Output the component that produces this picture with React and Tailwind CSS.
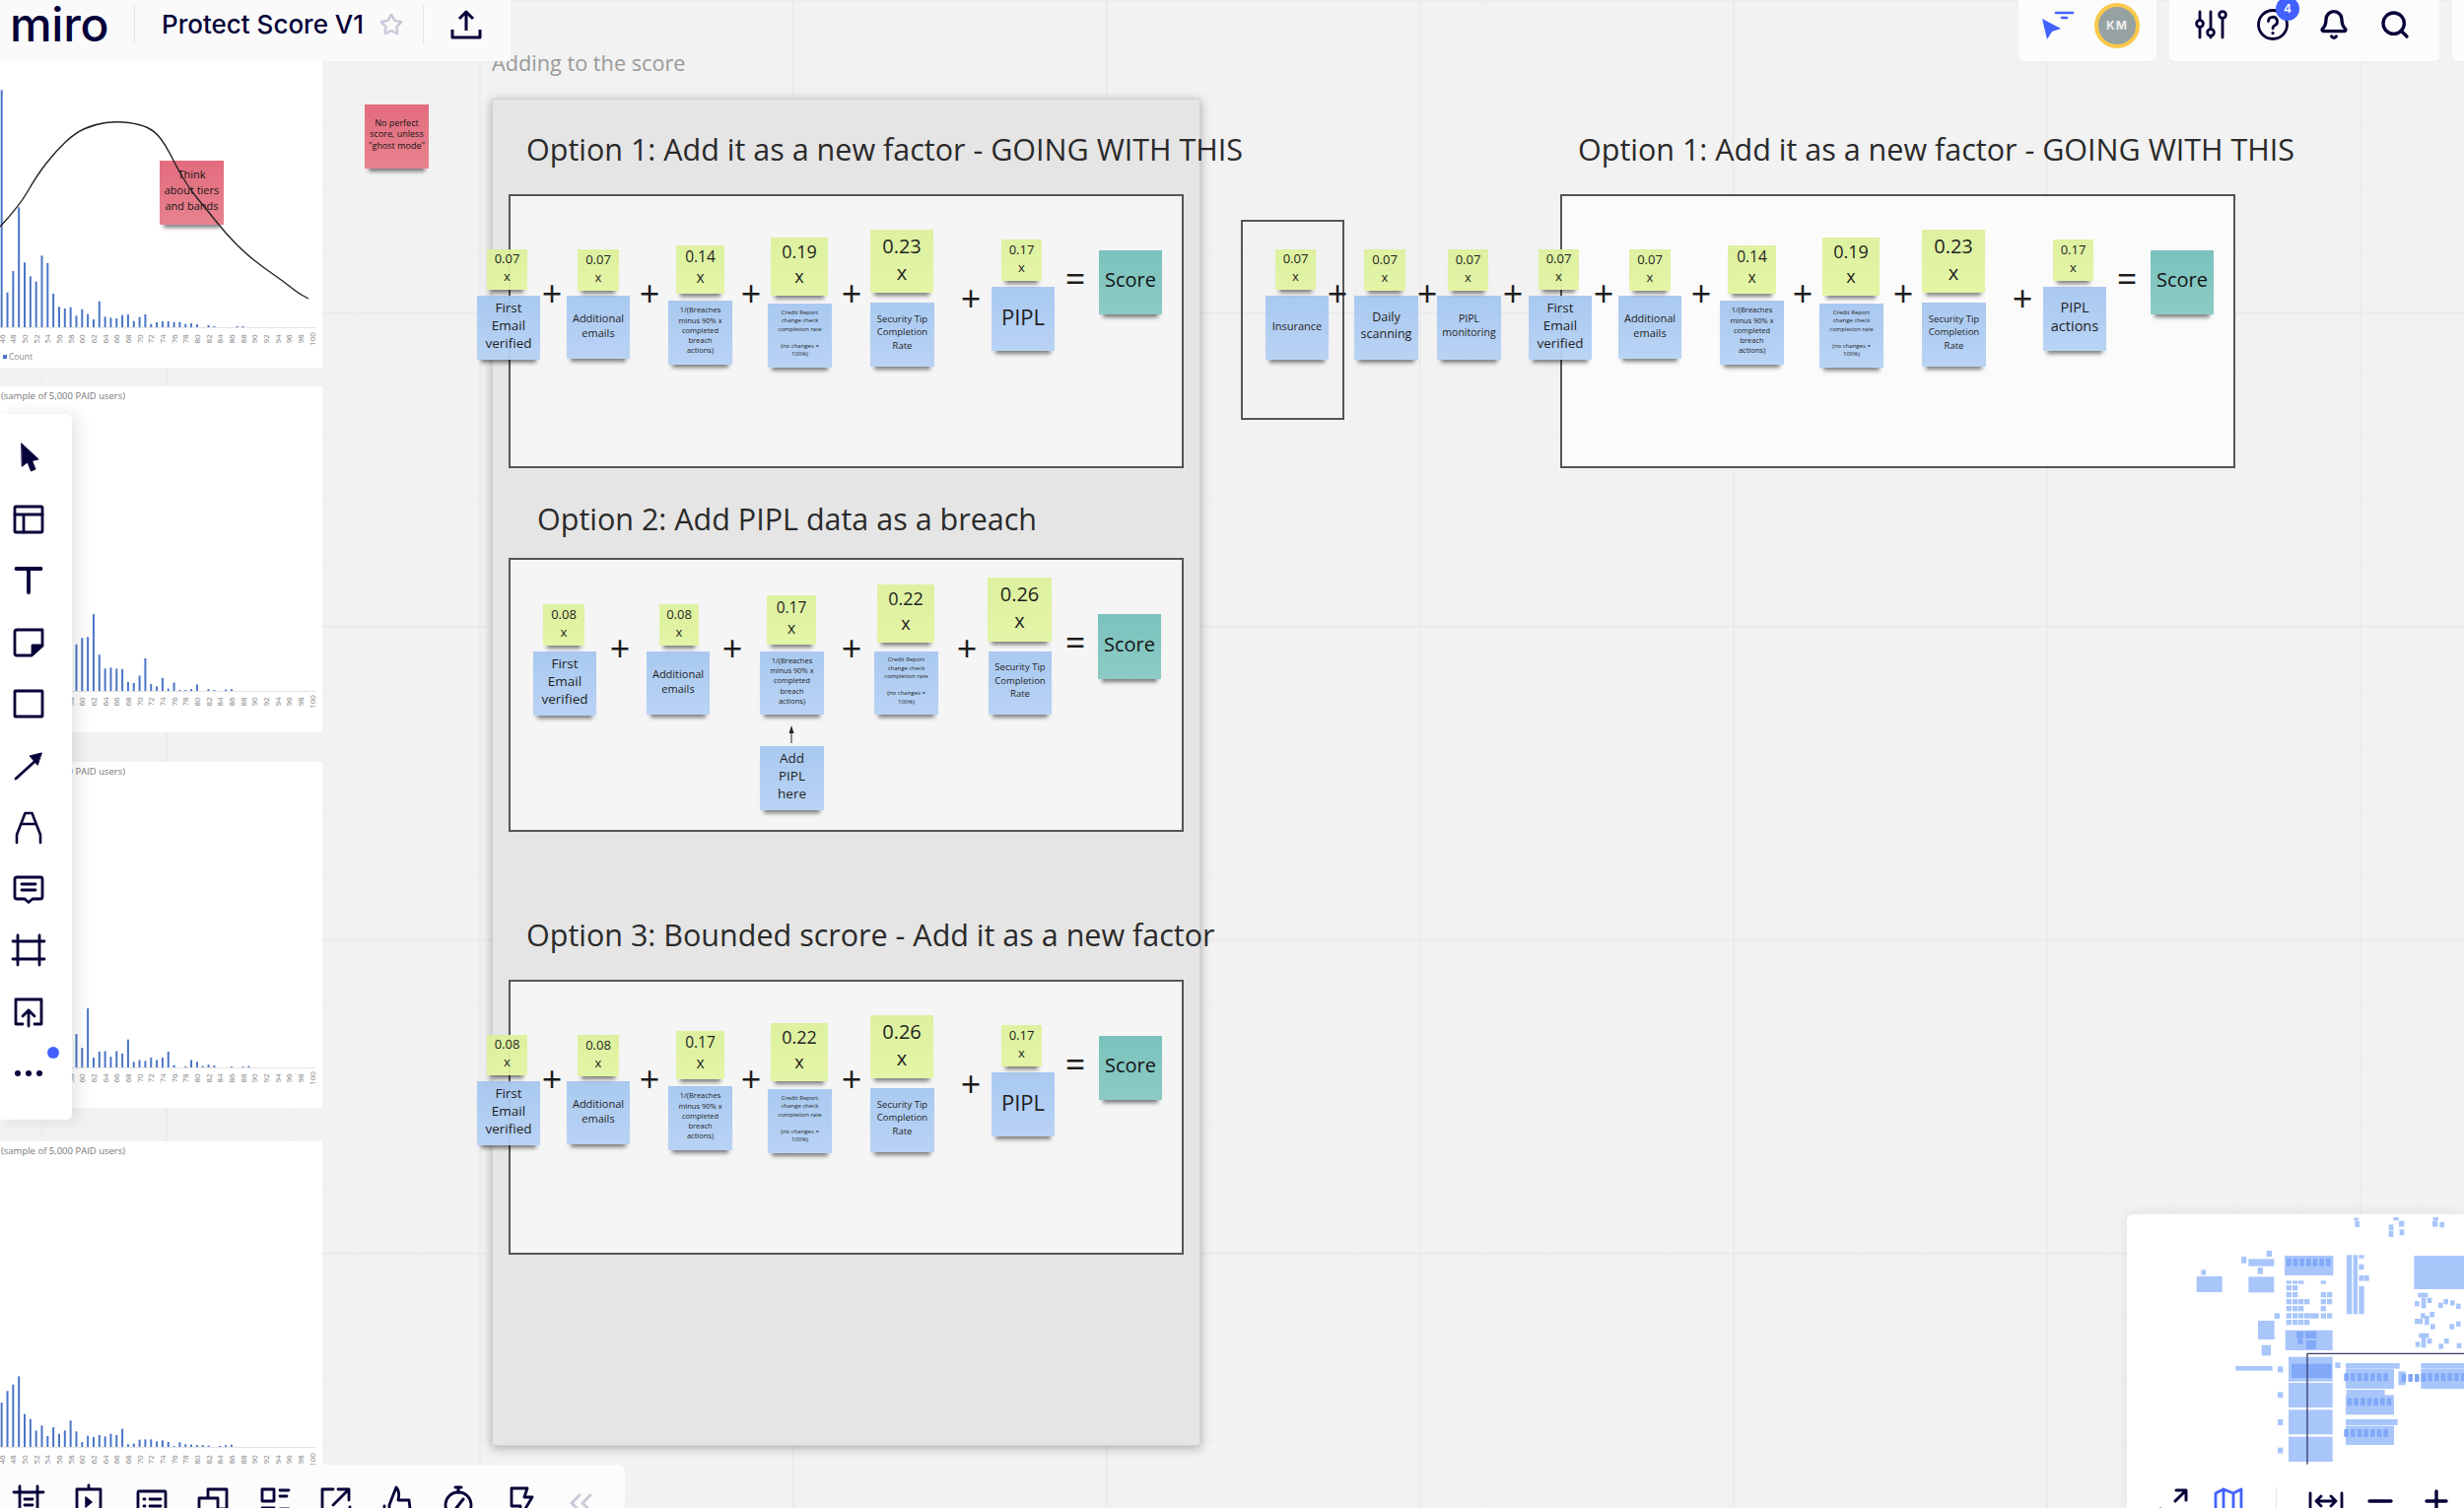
import { Bell, Search, Star } from 'lucide-react';

const ink = '#050038';

// option 1 / option 3 share the same sticky layout
const rowA = (g, last) => [
  { tone: 'blue', x: 484, y: 300, w: 64, h: 65, text: 'First\nEmail\nverified', cls: 'text-[13.5px] leading-[18px]' },
  { tone: 'green', x: 494, y: 253, w: 41, h: 41, text: `${g[0]}\nx`, cls: 'text-[13px] leading-[18px]' },
  { tone: 'blue', x: 575, y: 300, w: 64, h: 64, text: 'Additional\nemails', cls: 'text-[11px] leading-[15px]' },
  { tone: 'green', x: 586, y: 253, w: 42, h: 42, text: `${g[1]}\nx`, cls: 'text-[13px] leading-[18px]' },
  { tone: 'blue', x: 678, y: 305, w: 65, h: 65, text: '1/(Breaches\nminus 90% x\ncompleted\nbreach\nactions)', cls: 'text-[7.5px] leading-[10.3px]' },
  { tone: 'green', x: 686, y: 249, w: 49, h: 49, text: `${g[2]}\nx`, cls: 'text-[15.5px] leading-[21px]' },
  { tone: 'blue', x: 779, y: 308, w: 65, h: 65, text: 'Credit Report\nchange check\ncompletion rate\n\n(no changes =\n100%)', cls: 'text-[6px] leading-[8.5px]' },
  { tone: 'green', x: 782, y: 241, w: 58, h: 59, text: `${g[3]}\nx`, cls: 'text-[18px] leading-[25px]' },
  { tone: 'blue', x: 883, y: 307, w: 65, h: 65, text: 'Security Tip\nCompletion\nRate', cls: 'text-[9.5px] leading-[13.5px]' },
  { tone: 'green', x: 883, y: 233, w: 64, h: 64, text: `${g[4]}\nx`, cls: 'text-[20px] leading-[27px]' },
  { tone: 'blue', x: 1006, y: 291, w: 64, h: 65, ...last },
  { tone: 'green', x: 1016, y: 243, w: 41, h: 42, text: `${g[5]}\nx`, cls: 'text-[13px] leading-[18px]' },
  { tone: 'teal', x: 1115, y: 254, w: 64, h: 65, text: 'Score', cls: 'text-[20px] leading-[26px]' },
  { mark: '+', x: 560, y: 299 },
  { mark: '+', x: 659, y: 299 },
  { mark: '+', x: 762, y: 299 },
  { mark: '+', x: 864, y: 299 },
  { mark: '+', x: 985, y: 304 },
  { mark: '=', x: 1091, y: 284 },
];

const pipl = { text: 'PIPL', cls: 'text-[22px] leading-[28px]' };

const rowB = [
  { tone: 'blue', x: 541, y: 661, w: 64, h: 65, text: 'First\nEmail\nverified', cls: 'text-[13.5px] leading-[18px]' },
  { tone: 'green', x: 551, y: 613, w: 42, h: 42, text: '0.08\nx', cls: 'text-[13px] leading-[18px]' },
  { tone: 'blue', x: 656, y: 661, w: 64, h: 64, text: 'Additional\nemails', cls: 'text-[11px] leading-[15px]' },
  { tone: 'green', x: 669, y: 613, w: 40, h: 42, text: '0.08\nx', cls: 'text-[13px] leading-[18px]' },
  { tone: 'blue', x: 771, y: 661, w: 65, h: 64, text: '1/(Breaches\nminus 90% x\ncompleted\nbreach\nactions)', cls: 'text-[7.5px] leading-[10.3px]' },
  { tone: 'green', x: 778, y: 604, w: 50, h: 50, text: '0.17\nx', cls: 'text-[15.5px] leading-[21px]' },
  { tone: 'blue', x: 887, y: 661, w: 65, h: 64, text: 'Credit Report\nchange check\ncompletion rate\n\n(no changes =\n100%)', cls: 'text-[6px] leading-[8.5px]' },
  { tone: 'green', x: 890, y: 593, w: 58, h: 59, text: '0.22\nx', cls: 'text-[18px] leading-[25px]' },
  { tone: 'blue', x: 1003, y: 661, w: 64, h: 64, text: 'Security Tip\nCompletion\nRate', cls: 'text-[9.5px] leading-[13.5px]' },
  { tone: 'green', x: 1002, y: 586, w: 65, h: 65, text: '0.26\nx', cls: 'text-[20px] leading-[27px]' },
  { tone: 'teal', x: 1114, y: 623, w: 64, h: 66, text: 'Score', cls: 'text-[20px] leading-[26px]' },
  { tone: 'blue', x: 771, y: 757, w: 65, h: 65, text: 'Add\nPIPL\nhere', cls: 'text-[13.5px] leading-[18px]' },
  { mark: '+', x: 629, y: 659 },
  { mark: '+', x: 743, y: 659 },
  { mark: '+', x: 864, y: 659 },
  { mark: '+', x: 981, y: 659 },
  { mark: '=', x: 1091, y: 653 },
];

const rowExtra = [
  { tone: 'blue', x: 1284, y: 300, w: 64, h: 65, text: 'Insurance', cls: 'text-[11px] leading-[15px]' },
  { tone: 'green', x: 1294, y: 253, w: 41, h: 41, text: '0.07\nx', cls: 'text-[13px] leading-[18px]' },
  { tone: 'blue', x: 1374, y: 300, w: 65, h: 65, text: 'Daily\nscanning', cls: 'text-[12.5px] leading-[17px]' },
  { tone: 'green', x: 1384, y: 253, w: 42, h: 42, text: '0.07\nx', cls: 'text-[13px] leading-[18px]' },
  { tone: 'blue', x: 1458, y: 300, w: 65, h: 65, text: 'PIPL\nmonitoring', cls: 'text-[10.5px] leading-[14px]' },
  { tone: 'green', x: 1469, y: 253, w: 41, h: 42, text: '0.07\nx', cls: 'text-[13px] leading-[18px]' },
  { mark: '+', x: 1357, y: 299 },
  { mark: '+', x: 1448, y: 299 },
  { mark: '+', x: 1535, y: 299 },
];

const tones = {
  blue: 'bg-linear-to-b from-[#a6c7f0] to-[#b6d2f5] opacity-95',
  green: 'bg-linear-to-b from-[#dcf19c] to-[#e3f5a2] opacity-95',
  teal: 'bg-linear-to-b from-[#7bc2bc] to-[#8ccbc6]',
  pink: 'bg-linear-to-b from-[#e26c7e] to-[#e8828f]',
};

const Sticky = ({ x, y, w, h, tone, text, cls }) => (
  <div
    style={{ left: x, top: y, width: w, height: h }}
    className={`absolute flex items-center justify-center whitespace-pre pb-[5px] text-center font-['Open_Sans',sans-serif] text-[#141414] shadow-[0_7px_4px_-4px_rgba(0,0,0,0.5)] ${tones[tone]} ${cls}`}
  >
    {text}
  </div>
);

const Mark = ({ x, y, mark }) => (
  <div
    style={{ left: x - 20, top: y - 21 }}
    className="absolute flex h-[40px] w-[40px] items-center justify-center font-['Open_Sans',sans-serif] text-[36px] leading-none text-[#1c1c1c]"
  >
    {mark}
  </div>
);

const Row = ({ items, dx = 0, dy = 0 }) =>
  items.map((it, i) =>
    it.mark ? (
      <Mark key={i} mark={it.mark} x={it.x + dx} y={it.y + dy} />
    ) : (
      <Sticky key={i} {...it} x={it.x + dx} y={it.y + dy} />
    )
  );

const Title = ({ x, y, children }) => (
  <div
    style={{ left: x, top: y }}
    className="absolute whitespace-nowrap font-['Open_Sans',sans-serif] text-[30.5px] leading-[44px] text-[#2a2a2a]"
  >
    {children}
  </div>
);

const Box = ({ x, y, w, h, cls }) => (
  <div style={{ left: x, top: y, width: w, height: h }} className={`absolute border-2 border-[#555555] ${cls}`} />
);

/* ---------- charts ---------- */

const barX = (n) => 316.5 - (100 - n) * 5.83;
const labels = Array.from({ length: 28 }, (_, i) => 46 + i * 2);

const Chart = ({ start, heights, k, base, labelY, children }) => (
  <svg className="absolute inset-0 h-full w-full">
    <line x1="0" x2="320" y1={base + 0.5} y2={base + 0.5} stroke="#e3e3e3" />
    {heights.map((v, i) =>
      v ? <rect key={i} x={barX(start + i) - 1} y={base - v / k} width="2" height={v / k} fill="#4a76c6" /> : null
    )}
    {labels.map((n) => (
      <text
        key={n}
        transform={`translate(${barX(n) + 3} ${labelY}) rotate(-90)`}
        textAnchor="middle"
        fontSize="8"
        fill="#7d7d7d"
        fontFamily="'Open Sans', sans-serif"
      >
        {n}
      </text>
    ))}
    {children}
  </svg>
);

const Sample = ({ cls = '' }) => (
  <div className={`absolute left-[1px] top-[3px] whitespace-nowrap font-['Open_Sans',sans-serif] text-[9.5px] leading-[14px] text-[#777777] ${cls}`}>
    (sample of 5,000 PAID users)
  </div>
);

const smooth = (pts) => {
  let d = `M${pts[0][0]} ${pts[0][1]}`;
  for (let i = 1; i < pts.length - 1; i++) {
    const mx = (pts[i][0] + pts[i + 1][0]) / 2;
    const my = (pts[i][1] + pts[i + 1][1]) / 2;
    d += ` Q${pts[i][0]} ${pts[i][1]} ${mx} ${my}`;
  }
  const l = pts[pts.length - 1];
  return `${d} L${l[0]} ${l[1]}`;
};

const curve = [
  [0, 230], [19, 210], [38, 177], [57, 153], [76, 135], [96, 126], [119, 123], [142, 126], [157, 133],
  [168, 147], [178, 167], [191, 190], [210, 213], [230, 238], [249, 257], [268, 272], [287, 285], [302, 297], [313, 303],
];

const bars1 = [722, 106, 171, 365, 197, 155, 139, 218, 195, 102, 62, 57, 61, 35, 55, 40, 24, 79, 32, 29, 27, 37, 39, 19, 31, 39, 10, 15, 18, 18, 16, 16, 10, 12, 9, 0, 6, 3, 0, 0, 0, 3, 3];
const bars2 = [100, 114, 116, 165, 78, 48, 50, 48, 47, 19, 17, 33, 70, 15, 10, 28, 5, 18, 2, 2, 4, 14, 0, 4, 2, 0, 3, 4];
const bars3 = [72, 42, 127, 21, 34, 35, 23, 35, 30, 60, 12, 16, 14, 21, 16, 21, 34, 5, 0, 2, 16, 12, 3, 6, 4, 0, 0, 2, 0, 2, 3];
const bars4 = [135, 170, 190, 215, 100, 85, 50, 65, 33, 60, 40, 50, 80, 47, 15, 34, 30, 36, 32, 40, 36, 55, 8, 10, 22, 23, 23, 17, 20, 15, 3, 14, 8, 7, 6, 6, 4, 0, 3, 5, 7];

/* ---------- icons ---------- */

const Ico = ({ children, cls = '' }) => (
  <svg viewBox="0 0 32 32" fill="none" stroke={ink} strokeWidth="2.8" strokeLinecap="round" strokeLinejoin="round" overflow="visible" className={`h-8 w-8 shrink-0 ${cls}`}>
    {children}
  </svg>
);

const toolIcons = [
  <Ico key="cursor"><path d="M9 2 L26 18 L19.5 19.5 L23 28 L18.5 30 L15 21 L9.5 25 Z" fill={ink} strokeWidth="1" /></Ico>,
  <Ico key="tpl"><rect x="2" y="3" width="28" height="26" rx="1" /><path d="M2 11 H30 M11 11 V29" /></Ico>,
  <Ico key="text"><path d="M3.5 4 H28.5 M16 4 V28" strokeWidth="3.8" /></Ico>,
  <Ico key="note"><path d="M4 3 H30 V19 L19 29 H4 Q2 29 2 27 V5 Q2 3 4 3 Z" /><path d="M30 19 H20 V28 Z" fill={ink} /></Ico>,
  <Ico key="rect"><rect x="2" y="3" width="28" height="26" rx="0.5" /></Ico>,
  <Ico key="arrow"><path d="M3 29 L24 10" /><path d="M29 3 L17 6 L25 15 Z" fill={ink} strokeWidth="1" /></Ico>,
  <Ico key="pen"><path d="M4 32 V24 L12.5 2 H19.5 L28 24 V32 M9 13 H23" strokeWidth="2.6" /></Ico>,
  <Ico key="comment"><path d="M4 4 H28 Q30 4 30 6 V24 Q30 26 28 26 H20 L16 29.5 L12 26 H4 Q2 26 2 24 V6 Q2 4 4 4 Z" /><path d="M9 11 H23 M9 17 H23" /></Ico>,
  <Ico key="frame"><path d="M0 7 H32 M0 25 H32 M5 1 V31 M27 1 V31" /></Ico>,
  <Ico key="upload"><path d="M10 28 H3 V3 H29 V28 H22" /><path d="M16 30 V14 M10 20 L16 14 L22 20" /></Ico>,
  <Ico key="dots"><g fill={ink} stroke="none"><circle cx="5" cy="16" r="3" /><circle cx="16" cy="16" r="3" /><circle cx="27" cy="16" r="3" /></g></Ico>,
];

const bottomIcons = [
  <Ico key="a"><path d="M1 7 H31 M7 1 V32 M25 1 V32 M12 14 H20 M12 20 H20 M12 27 H20" /></Ico>,
  <Ico key="b"><path d="M15 0 V4 M3 4 H27 V32 H3 Z" /><path d="M12 12 L18 17 L12 22 Z" fill={ink} strokeWidth="1.5" /></Ico>,
  <Ico key="c"><rect x="2" y="6" width="28" height="28" rx="1" /><path d="M8 14 H9 M14 14 H25 M8 21 H9 M14 21 H25" /></Ico>,
  <Ico key="d"><path d="M2 32 V13 H21 V32 M11 13 V4 H30 V24 H21" /></Ico>,
  <Ico key="e"><rect x="4" y="4" width="12" height="12" /><path d="M22 5 H31 M22 11 H29 M4 23 H16 V32 M22 24 H31" /></Ico>,
  <Ico key="f"><path d="M14 4 H3 V32 M31 22 V32 M14 20 L28 6 M19 4 H30 V15" /></Ico>,
  <Ico key="g"><path d="M3 32 V21 M8 32 V20 L15 2 Q19 6 17 15 H28 L30 32" /></Ico>,
  <Ico key="h"><circle cx="16" cy="20" r="13" /><path d="M16 2 V7 M13 2 H19 M14 23 L21 14" strokeWidth="3" /></Ico>,
  <Ico key="i"><path d="M8 3 H24 L21 12 H29 L17 32 V21 H8 Z" /></Ico>,
  <Ico key="j"><path d="M14 10 L6 18 L14 26 M25 10 L17 18 L25 26" stroke="#c9c9d8" strokeWidth="3" /></Ico>,
];

const Sliders = () => (
  <Ico>
    <path d="M4 3 V11 M4 19 V29 M15 3 V20 M15 28 V29 M27 11 V29" />
    <circle cx="4" cy="15" r="3.4" />
    <circle cx="15" cy="24" r="3.4" />
    <circle cx="27" cy="6" r="3.4" />
  </Ico>
);

const Help = () => (
  <div className="relative h-8 w-8">
    <Ico>
      <circle cx="16" cy="16" r="14.5" />
      <path d="M11.5 12.5 A4.5 4.5 0 1 1 17.5 17 Q16 17.8 16 20" />
      <path d="M16 24.5 V24.6" strokeWidth="3.2" />
    </Ico>
    <div className="absolute left-[19px] top-[-12px] flex h-[24px] w-[24px] items-center justify-center rounded-full bg-[#4262ff] font-['Inter',sans-serif] text-[12px] font-semibold text-white">
      4
    </div>
  </div>
);

/* ---------- minimap ---------- */

const mm = [
  [745,47,14,8],[748,57,14,18],[865,45,16,10],[882,56,16,18],[851,67,14,18],[851,87,14,18],[884,82,14,18],[986,45,16,10],[984,56,16,18],[1006,60,14,16],
  [479,147,16,18],[402,165,16,20],[424,172,78,22],[452,198,16,20],[280,205,14,16],[266,225,78,48],[424,226,78,48],[534,162,148,60],
  [723,160,16,180],[743,160,13,180],[760,160,16,10],[760,188,15,17],[760,222,15,17],[776,222,15,17],[760,255,16,85],[928,162,152,102],
  [539,238,16,10],[558,238,16,10],[576,238,16,10],[644,238,16,10],[539,252,16,16],[558,252,16,16],[539,273,16,16],[558,273,16,16],[644,273,16,16],[663,273,16,16],
  [539,294,16,16],[558,294,16,16],[576,294,16,16],[594,294,16,16],[644,294,16,16],[663,294,16,16],[539,315,16,16],[558,315,16,16],[576,315,16,16],[644,315,16,16],
  [539,337,16,16],[558,337,16,16],[576,337,16,16],[594,337,16,16],[610,337,28,16],[644,337,16,16],[663,337,16,16],[539,357,16,16],[558,357,16,16],[576,357,16,16],[594,357,16,16],
  [503,337,16,17],[453,360,50,57],[464,434,28,32],[536,389,144,61],
  [546,470,134,75],[546,549,134,75],[546,631,134,75],[546,713,134,76],[513,499,16,18],[513,577,16,18],[513,660,16,18],[513,746,16,18],[688,487,16,17],[385,498,112,14],
  [720,489,164,17],[720,507,147,60],[722,570,117,18],[720,586,147,60],[775,627,14,17],[720,660,158,18],[720,680,147,58],[880,514,22,42],[949,489,131,17],[949,507,131,60],
  [940,275,30,14],[950,290,14,32],[968,290,14,16],[930,300,14,16],[1002,305,14,16],[1018,294,14,16],[1038,298,14,16],[1056,308,14,16],[930,354,24,16],[948,337,14,16],[960,345,14,28],[976,333,14,16],[978,370,14,16],[1036,370,14,16],[1056,362,14,16],
  [943,398,30,14],[950,410,14,32],[968,414,14,16],[932,424,14,16],[1003,430,14,16],[1020,414,14,16],[1058,428,14,16],
];
const mmDark = [
  [570,392,22,20],[597,392,34,22],[575,412,14,20],[600,420,30,26],[555,491,122,43],
];
// sticky clusters read as a row of small darker blobs on the map
const clusters = [
  [540,170,7],[715,520,7],[725,595,7],[715,690,7],[890,522,4],[950,520,7],
];

const Minimap = () => (
  <svg viewBox="54 36 1026 780" className="h-[260px] w-[342px] shrink-0">
    {mm.map((r, i) => <rect key={i} x={r[0]} y={r[1]} width={r[2]} height={r[3]} fill="#a9c6fb" />)}
    {mmDark.map((r, i) => <rect key={i} x={r[0]} y={r[1]} width={r[2]} height={r[3]} fill="#82a8f8" />)}
    {clusters.flatMap(([x, y, n]) =>
      Array.from({ length: n }, (_, i) => (
        <rect key={`${x}-${y}-${i}`} x={x + i * 20} y={y} width="14" height="24" rx="3" fill="#82a8f8" />
      ))
    )}
    <path d="M1080 460 H603 V797" stroke="#3b3b68" strokeWidth="4" fill="none" />
  </svg>
);

export default function App() {
  return (
    <div className="relative h-[1530px] w-[2500px] overflow-hidden bg-[#f2f2f2] bg-[linear-gradient(to_right,#ebebeb_2px,transparent_2px),linear-gradient(to_bottom,#ebebeb_2px,transparent_2px),linear-gradient(to_right,#eeeeee_1px,transparent_1px),linear-gradient(to_bottom,#eeeeee_1px,transparent_1px)] bg-[size:318px_318px,318px_318px,63.6px_63.6px,63.6px_63.6px] bg-[position:168px_0,0_317px,41px_0,0_62px]">
      {/* board */}
      <div className="absolute left-[499px] top-[100px] h-[1367px] w-[719px] border border-[#d2d2d2] bg-[#e5e5e5] shadow-[0_2px_10px_rgba(0,0,0,0.3)]" />
      <div className="absolute left-[499px] top-[51px] font-['Open_Sans',sans-serif] text-[21.7px] leading-[26px] text-[#9a9a9a]">
        Adding to the score
      </div>

      <Box x={516} y={197} w={685} h={278} cls="bg-[#f5f5f5]" />
      <Box x={516} y={566} w={685} h={278} cls="bg-[#f5f5f5]" />
      <Box x={516} y={994} w={685} h={279} cls="bg-[#f5f5f5]" />
      <Box x={1583} y={197} w={685} h={278} cls="bg-white/70" />
      <Box x={1259} y={223} w={105} h={203} />

      <Title x={534} y={129}>Option 1: Add it as a new factor - GOING WITH THIS</Title>
      <Title x={545} y={504}>Option 2: Add PIPL data as a breach</Title>
      <Title x={534} y={926}>Option 3: Bounded scrore - Add it as a new factor</Title>
      <Title x={1601} y={129}>Option 1: Add it as a new factor - GOING WITH THIS</Title>

      <Row items={rowA(['0.07', '0.07', '0.14', '0.19', '0.23', '0.17'], pipl)} />
      <Row items={rowB} />
      <Row items={rowA(['0.08', '0.08', '0.17', '0.22', '0.26', '0.17'], pipl)} dy={797} />
      <Row items={rowExtra} />
      <Row
        items={rowA(['0.07', '0.07', '0.14', '0.19', '0.23', '0.17'], { text: 'PIPL\nactions', cls: 'text-[14.5px] leading-[19px]' })}
        dx={1067}
      />
      <svg className="absolute left-[796px] top-[735px] h-[20px] w-[14px]" viewBox="0 0 14 20">
        <path d="M7 19 V6" stroke="#222" strokeWidth="1" />
        <path d="M7 1 L9.5 9 H4.5 Z" fill="#222" />
      </svg>

      <Sticky tone="pink" x={370} y={106} w={65} h={65} text={'No perfect\nscore, unless\n"ghost mode"'} cls="text-[9px] leading-[11.5px]" />

      {/* chart screenshots */}
      <div className="absolute left-0 top-[62px] flex w-[327px] flex-col">
        <div className="relative h-[311px] bg-white">
          <Sticky tone="pink" x={162} y={101} w={65} h={65} text={'Think\nabout tiers\nand bands'} cls="text-[11px] leading-[16px]" />
          <Chart start={46} heights={bars1} k={3} base={270} labelY={282}>
            <path d={smooth(curve.map(([x, y]) => [x, y - 62]))} fill="none" stroke="#222" strokeWidth="1.4" />
          </Chart>
          <div className="absolute left-[3px] top-[294px] flex items-center gap-[2px] font-['Open_Sans',sans-serif] text-[8.5px] leading-[12px] text-[#888888]">
            <span className="h-[4px] w-[4px] bg-[#4a76c6]" />
            Count
          </div>
        </div>
        <div className="relative mt-[19px] h-[351px] bg-white">
          <Sample />
          <Chart start={59} heights={bars2} k={2.119} base={309} labelY={320} />
        </div>
        <div className="relative mt-[30px] h-[351px] bg-white">
          <Sample />
          <Chart start={59} heights={bars3} k={2.119} base={310} labelY={321} />
        </div>
        <div className="relative mt-[34px] h-[340px] bg-white">
          <Sample />
          <Chart start={46} heights={bars4} k={3} base={310} labelY={323} />
        </div>
      </div>

      {/* top bar */}
      <div className="absolute left-0 top-0 flex h-[62px] w-[518px] items-center bg-[#fafafa] pb-[12px]">
        <div className="flex w-[136px] justify-start pl-[10px] font-['Inter',sans-serif] text-[48px] font-medium leading-none tracking-[-0.3px] text-[#050038]">
          miro
        </div>
        <div className="h-[38px] w-px bg-[#e3e3ea]" />
        <div className="ml-[27px] font-['Inter',sans-serif] text-[26px] font-medium leading-none text-[#050038]">
          Protect Score V1
        </div>
        <Star size={24} strokeWidth={2.5} className="ml-[16px] text-[#c9c9da]" />
        <div className="ml-[20px] h-[38px] w-px bg-[#e3e3ea]" />
        <Ico cls="ml-[27px]">
          <path d="M16 22 V3 M9 10 L16 3 L23 10 M2 21 V29 H30 V21" strokeWidth="3" strokeLinecap="butt" />
        </Ico>
      </div>

      {/* top right */}
      <div className="absolute right-0 top-0 flex gap-[13px]">
        <div className="flex h-[62px] w-[140px] items-center gap-[20px] rounded-b-md bg-[#fcfcfc] pb-[10px] pl-[23px]">
          <svg viewBox="0 0 34 30" className="h-[30px] w-[34px]">
            <path d="M1 8 L20 18 L11 21 L6 29 Z" fill="#4262ff" />
            <path d="M15 2 H32" stroke="#4262ff" strokeWidth="2.6" strokeLinecap="round" />
            <path d="M21 7 H26" stroke="#4262ff" strokeWidth="2.6" strokeLinecap="round" />
          </svg>
          <div className="flex h-[46px] w-[46px] items-center justify-center rounded-full border-[4px] border-[#fac84b] bg-[#96a2a2] font-['Inter',sans-serif] text-[12px] font-bold tracking-[1px] text-[#eeeeee]">
            KM
          </div>
        </div>
        <div className="flex h-[62px] w-[274px] items-center gap-[30px] rounded-b-md bg-[#fcfcfc] pb-[12px] pl-[27px]">
          <Sliders />
          <Help />
          <Bell size={32} strokeWidth={2.5} color={ink} />
          <Search size={32} strokeWidth={2.5} color={ink} />
        </div>
        <div className="h-[62px] w-[12px] rounded-bl-md bg-[#fcfcfc]" />
      </div>

      {/* left toolbar */}
      <div className="absolute left-0 top-[420px] flex h-[716px] w-[73px] flex-col gap-[30.5px] rounded-r-md bg-white pl-[13px] pt-[28px] shadow-[6px_0_16px_rgba(0,0,0,0.1)]">
        {toolIcons}
        <span className="absolute left-[48px] top-[642px] h-[12px] w-[12px] rounded-full bg-[#4262ff]" />
      </div>

      {/* bottom bar */}
      <div className="absolute bottom-0 left-0 flex h-[44px] w-[634px] gap-[30.3px] rounded-tr-md bg-[#fcfcfc] pl-[13px] pt-[21px]">
        {bottomIcons}
      </div>

      {/* minimap */}
      <div className="absolute bottom-0 right-0 flex h-[298px] w-[342px] flex-col overflow-hidden rounded-tl-md bg-white shadow-[0_0_14px_rgba(0,0,0,0.08)]">
        <Minimap />
        <div className="flex items-start pl-[31px] pt-[17px]">
          <Ico>
            <path d="M18 14 L28 4 M19 3 H29 V13 M3 29 L7 25 M3 22 V29 H10" strokeWidth="3" />
          </Ico>
          <Ico cls="ml-[24px]">
            <path d="M3 6 L11 2 L21 6 L29 2 V30 L21 26 L11 30 L3 26 Z M11 2 V30 M21 6 V26" stroke="#4262ff" />
          </Ico>
          <div className="ml-[32px] h-[30px] w-px bg-[#e0e0e6]" />
          <Ico cls="ml-[34px]">
            <path d="M0 6 V32 M32 6 V32 M6 14 H26 M11 9 L6 14 L11 19 M21 9 L26 14 L21 19" />
          </Ico>
          <Ico cls="ml-[23px]">
            <path d="M5 14 H27" strokeWidth="3.4" />
          </Ico>
          <Ico cls="ml-[25px]">
            <path d="M6 14 H26 M16 4 V24" strokeWidth="3.4" />
          </Ico>
        </div>
      </div>
    </div>
  );
}
